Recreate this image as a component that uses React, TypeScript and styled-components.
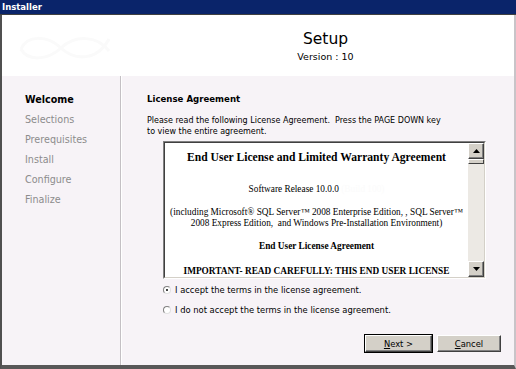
import React from 'react';
import styled, { createGlobalStyle } from 'styled-components';

const GlobalStyle = createGlobalStyle`
  html, body {
    margin: 0;
    padding: 0;
    background: #ffffff;
  }
  * {
    box-sizing: border-box;
  }
`;

const UI_FONT = `"DejaVu Sans", Verdana, sans-serif`;
const DOC_FONT = `"Liberation Serif", "Times New Roman", serif`;

const Window = styled.div`
  width: 516px;
  height: 369px;
  display: flex;
  flex-direction: column;
  overflow: hidden;
  font-family: ${UI_FONT};
`;

const TitleBar = styled.div`
  height: 15px;
  background: #0a246a;
  color: #ffffff;
  font-weight: bold;
  font-size: 8.5px;
  line-height: 15px;
  padding-left: 2px;
  border-bottom: 1px solid #404040;
`;

const Frame = styled.div`
  flex: 1;
  display: flex;
  flex-direction: column;
  border-left: 2px solid #505050;
  border-right: 2px solid #c8c4c8;
  border-bottom: 4px solid #585858;
  box-shadow: inset 0 -1px 0 #e4e0e4;
`;

const Header = styled.div`
  height: 61px;
  background: #ffffff;
  display: grid;
  grid-template-columns: 120px 1fr;
  align-items: center;
  border-left: 1px solid #ffffff;
`;

const Logo = styled.svg`
  width: 98px;
  height: 34px;
  margin-left: 14px;
  margin-top: 4px;
`;

const TitleBlock = styled.div`
  display: flex;
  flex-direction: column;
  align-items: center;
  padding-left: 14px;
  padding-top: 2px;
`;

const Title = styled.div`
  font-size: 15.5px;
  line-height: 18px;
  margin-bottom: 3px;
  color: #000000;
`;

const Version = styled.div`
  font-size: 9.5px;
  line-height: 12px;
  color: #000000;
`;

const Body = styled.div`
  flex: 1;
  display: flex;
  background: #f7f3f7;
`;

const Sidebar = styled.div`
  width: 119px;
  padding: 14px 0 0 23px;
  border-right: 1px solid #c4c0c4;
  box-shadow: 1px 0 0 #ffffff;
`;

const Step = styled.div<{ $active?: boolean }>`
  font-size: 9.6px;
  line-height: 20px;
  color: ${(p) => (p.$active ? '#000000' : '#8c8c8c')};
  font-weight: ${(p) => (p.$active ? 'bold' : 'normal')};
`;

const Content = styled.div`
  flex: 1;
  display: flex;
  flex-direction: column;
  padding: 18px 0 0 26px;
`;

const Heading = styled.div`
  font-size: 8.6px;
  font-weight: bold;
  line-height: 11px;
  color: #000000;
`;

const Intro = styled.p`
  margin: 10px 0 0 0;
  font-size: 8px;
  line-height: 11px;
  color: #000000;
`;

const LicenseBox = styled.div`
  margin: 4px 0 0 16px;
  width: 323px;
  height: 138px;
  display: flex;
  border-top: 1px solid #808080;
  border-left: 1px solid #808080;
  border-right: 1px solid #ffffff;
  border-bottom: 1px solid #ffffff;
`;

const LicenseInner = styled.div`
  flex: 1;
  display: flex;
  border-top: 1px solid #404040;
  border-left: 1px solid #404040;
  border-right: 1px solid #d4d0c8;
  border-bottom: 1px solid #d4d0c8;
  background: #ffffff;
`;

const LicenseText = styled.div`
  flex: 1;
  overflow: hidden;
  font-family: ${DOC_FONT};
  color: #000000;
  text-align: center;
  white-space: nowrap;
  padding: 7px 0 0 0;
`;

const DocTitle = styled.div`
  font-size: 11.6px;
  font-weight: bold;
  line-height: 15px;
`;

const DocLine = styled.div<{ $gap: number }>`
  margin-top: ${(p) => p.$gap}px;
  font-size: 9.3px;
  line-height: 11px;
`;

const DocBold = styled.div<{ $gap: number }>`
  margin-top: ${(p) => p.$gap}px;
  font-size: 9.3px;
  font-weight: bold;
  line-height: 11px;
`;

const Faint = styled.span`
  color: #fbfbfb;
`;

const ScrollBar = styled.div`
  width: 16px;
  display: flex;
  flex-direction: column;
  background: #ece9e4;
`;

const ScrollButton = styled.div`
  width: 16px;
  height: 16px;
  background: #d4d0c8;
  border-top: 1px solid #ffffff;
  border-left: 1px solid #ffffff;
  border-right: 1px solid #404040;
  border-bottom: 1px solid #404040;
  box-shadow: inset -1px -1px 0 #808080;
  display: flex;
  align-items: center;
  justify-content: center;
`;

const Thumb = styled.div`
  width: 16px;
  height: 5px;
  background: #d4d0c8;
  border-top: 1px solid #ffffff;
  border-left: 1px solid #ffffff;
  border-right: 1px solid #404040;
  border-bottom: 1px solid #404040;
`;

const Track = styled.div`
  flex: 1;
`;

const Option = styled.label<{ $gap: number }>`
  display: flex;
  align-items: center;
  gap: 4px;
  margin: ${(p) => p.$gap}px 0 0 16px;
  height: 10px;
  font-size: 8.4px;
  line-height: 10px;
  color: #000000;
`;

const Radio = styled.span<{ $checked?: boolean }>`
  width: 8px;
  height: 8px;
  border-radius: 50%;
  background: #ffffff;
  border: 1px solid #808080;
  border-right-color: #e0e0e0;
  border-bottom-color: #e0e0e0;
  display: flex;
  align-items: center;
  justify-content: center;

  &::after {
    content: '';
    width: 2px;
    height: 2px;
    border-radius: 50%;
    background: ${(p) => (p.$checked ? '#000000' : 'transparent')};
  }
`;

const ButtonRow = styled.div`
  display: flex;
  justify-content: flex-end;
  align-items: center;
  gap: 5px;
  margin-top: 20px;
  padding-right: 13px;
`;

const Button = styled.button<{ $default?: boolean; $width: number }>`
  width: ${(p) => p.$width}px;
  height: 17px;
  padding: 0;
  font-family: ${UI_FONT};
  font-size: 8.4px;
  color: #000000;
  background: #d4d0c8;
  border-top: 1px solid #ffffff;
  border-left: 1px solid #ffffff;
  border-right: 1px solid #404040;
  border-bottom: 1px solid #404040;
  box-shadow: inset -1px -1px 0 #808080
    ${(p) => (p.$default ? ', 0 0 0 1px #000000' : '')};

  u {
    text-decoration: underline;
  }
`;

function Arrow({ up }: { up?: boolean }) {
  return (
    <svg width="7" height="4" viewBox="0 0 7 4">
      <polygon points={up ? '3.5,0 7,4 0,4' : '0,0 7,0 3.5,4'} fill="#000000" />
    </svg>
  );
}

const steps = ['Welcome', 'Selections', 'Prerequisites', 'Install', 'Configure', 'Finalize'];

export default function App() {
  return (
    <>
      <GlobalStyle />
      <Window>
        <TitleBar>Installer</TitleBar>
        <Frame>
          <Header>
            <Logo viewBox="0 0 98 34">
              <path
                d="M4 18 C10 4 30 4 44 17 C58 30 80 30 92 8 M4 18 C10 30 30 30 44 17 C58 4 80 4 92 20"
                fill="none"
                stroke="#fafafa"
                strokeWidth="3"
              />
            </Logo>
            <TitleBlock>
              <Title>Setup</Title>
              <Version>Version : 10</Version>
            </TitleBlock>
          </Header>
          <Body>
            <Sidebar>
              {steps.map((s, i) => (
                <Step key={s} $active={i === 0}>
                  {s}
                </Step>
              ))}
            </Sidebar>
            <Content>
              <Heading>License Agreement</Heading>
              <Intro>
                Please read the following License Agreement.&nbsp; Press the PAGE DOWN key
                <br />
                to view the entire agreement.
              </Intro>
              <LicenseBox>
                <LicenseInner>
                  <LicenseText>
                    <DocTitle>End User License and Limited Warranty Agreement</DocTitle>
                    <DocLine $gap={19}>
                      Software Release 10.0.0 <Faint>(Build 100)</Faint>
                    </DocLine>
                    <DocLine $gap={12}>
                      (including Microsoft® SQL Server™ 2008 Enterprise Edition, , SQL Server™
                      <br />
                      2008 Express Edition,&nbsp; and Windows Pre-Installation Environment)
                    </DocLine>
                    <DocBold $gap={12}>End User License Agreement</DocBold>
                    <DocBold $gap={14}>IMPORTANT- READ CAREFULLY: THIS END USER LICENSE</DocBold>
                  </LicenseText>
                  <ScrollBar>
                    <ScrollButton>
                      <Arrow up />
                    </ScrollButton>
                    <Thumb />
                    <Track />
                    <ScrollButton>
                      <Arrow />
                    </ScrollButton>
                  </ScrollBar>
                </LicenseInner>
              </LicenseBox>
              <Option $gap={6}>
                <Radio $checked />
                I accept the terms in the license agreement.
              </Option>
              <Option $gap={10}>
                <Radio />
                I do not accept the terms in the license agreement.
              </Option>
              <ButtonRow>
                <Button $default $width={67}>
                  <u>N</u>ext &gt;
                </Button>
                <Button $width={64}>
                  <u>C</u>ancel
                </Button>
              </ButtonRow>
            </Content>
          </Body>
        </Frame>
      </Window>
    </>
  );
}
